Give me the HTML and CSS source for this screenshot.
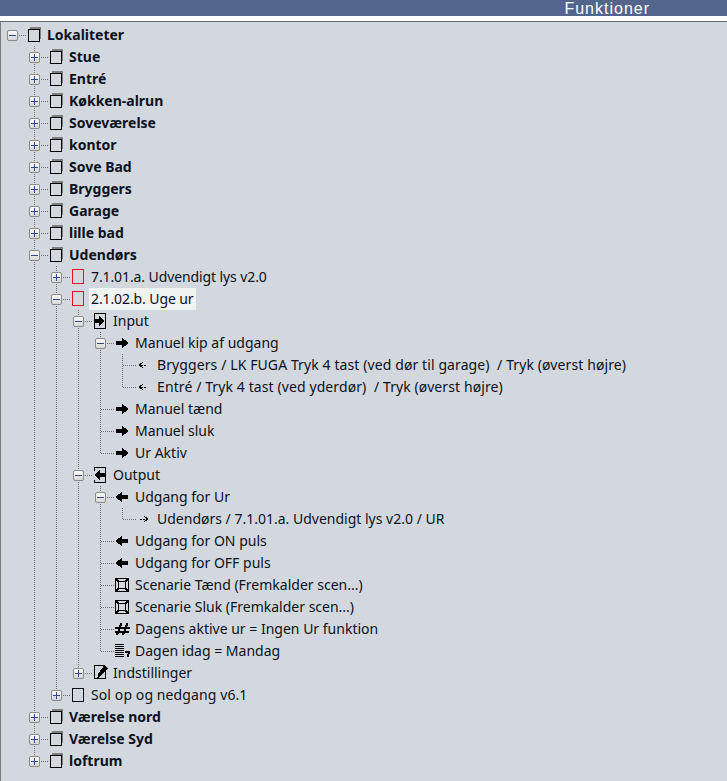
FILE: index.html
```html
<!DOCTYPE html>
<html lang="en">
<head>
    <meta charset="UTF-8">
    <meta name="viewport" content="width=device-width, initial-scale=1.0">
    <title>Funktioner</title>
    <link rel="stylesheet" href="styles.css">
</head>
<body>
    <svg class="defs" width="0" height="0">
        <symbol id="folder" viewBox="0 0 16 16">
            <path d="M4 0H15V12H13V2H4Z" fill="#7f7f7f"/>
            <rect x="2.5" y="2.5" width="10.5" height="12" fill="none" stroke="#000"/>
        </symbol>
        <symbol id="red" viewBox="0 0 16 16">
            <rect x="2.5" y="0.5" width="11" height="14" fill="none" stroke="#e8141c"/>
        </symbol>
        <symbol id="doc" viewBox="0 0 16 16">
            <rect x="2.5" y="1.5" width="11" height="13" fill="none" stroke="#111"/>
        </symbol>
        <symbol id="input" viewBox="0 0 16 16">
            <rect x="2.5" y="0.5" width="11" height="15" fill="none" stroke="#000"/>
            <path d="M2 6H7V2.5L12.5 8L7 13.5V10H2Z" fill="#000"/>
        </symbol>
        <symbol id="output" viewBox="0 0 16 16">
            <path d="M2.5 3.5V0.5H13.5V15H2.5V12.5" fill="none" stroke="#000"/>
            <path d="M13 6H8V2.5L2.5 8L8 13.5V10H13Z" fill="#000"/>
        </symbol>
        <symbol id="right" viewBox="0 0 16 16">
            <path d="M2 6H8V2.5L14.5 8L8 13.5V10H2Z" fill="#000"/>
        </symbol>
        <symbol id="left" viewBox="0 0 16 16">
            <path d="M14 6H8V2.5L1.5 8L8 13.5V10H14Z" fill="#000"/>
        </symbol>
        <symbol id="in-link" viewBox="0 0 16 16">
            <path d="M7 5L3.5 8L7 11" fill="none" stroke="#000"/>
            <path d="M5 8.5H11" fill="none" stroke="#000" stroke-dasharray="2 1"/>
        </symbol>
        <symbol id="out-link" viewBox="0 0 16 16">
            <path d="M8 5L11.5 8L8 11" fill="none" stroke="#000"/>
            <path d="M4 8.5H10" fill="none" stroke="#000" stroke-dasharray="2 1"/>
        </symbol>
        <symbol id="scene" viewBox="0 0 16 16">
            <rect x="1.5" y="1.5" width="13" height="13" fill="none" stroke="#000"/>
            <rect x="4.5" y="4.5" width="7" height="7" fill="none" stroke="#000"/>
            <path d="M1.5 1.5L4.5 4.5M14.5 1.5L11.5 4.5M1.5 14.5L4.5 11.5M14.5 14.5L11.5 11.5" fill="none" stroke="#000" stroke-width="1.5"/>
        </symbol>
        <symbol id="hash" viewBox="0 0 16 16">
            <path d="M7.5 2L3 14M13.5 2L9 14" fill="none" stroke="#000" stroke-width="2"/>
            <path d="M1 6.5H16M1 10.5H15" fill="none" stroke="#000" stroke-width="2"/>
        </symbol>
        <symbol id="list" viewBox="0 0 16 16">
            <path d="M1 1.5H10M1 3.5H10M1 5.5H10M1 7.5H10M1 9.5H10M1 11.5H10M1 13.5H10" fill="none" stroke="#000"/>
            <path d="M11 8H16V10L14.5 14H12.5L14 10H11Z" fill="#000"/>
        </symbol>
        <symbol id="edit" viewBox="0 0 16 16">
            <path d="M11.5 0.5H2.5V13.5H13.5V6" fill="none" stroke="#000"/>
            <path d="M12.5 0L16 3L9.5 10.5L5 13.5L6.5 8Z" fill="#000"/>
        </symbol>
    </svg>

    <header class="title-bar"><span>Funktioner</span></header>

    <main class="panel">
        <ul class="tree root">
            <li class="last">
                <div class="row bold"><i class="exp open"></i><svg class="ico"><use href="#folder"/></svg><span class="label">Lokaliteter</span></div>
                <ul class="tree">
                    <li><div class="row bold"><i class="exp"></i><svg class="ico"><use href="#folder"/></svg><span class="label">Stue</span></div></li>
                    <li><div class="row bold"><i class="exp"></i><svg class="ico"><use href="#folder"/></svg><span class="label">Entré</span></div></li>
                    <li><div class="row bold"><i class="exp"></i><svg class="ico"><use href="#folder"/></svg><span class="label">Køkken-alrun</span></div></li>
                    <li><div class="row bold"><i class="exp"></i><svg class="ico"><use href="#folder"/></svg><span class="label">Soveværelse</span></div></li>
                    <li><div class="row bold"><i class="exp"></i><svg class="ico"><use href="#folder"/></svg><span class="label">kontor</span></div></li>
                    <li><div class="row bold"><i class="exp"></i><svg class="ico"><use href="#folder"/></svg><span class="label">Sove Bad</span></div></li>
                    <li><div class="row bold"><i class="exp"></i><svg class="ico"><use href="#folder"/></svg><span class="label">Bryggers</span></div></li>
                    <li><div class="row bold"><i class="exp"></i><svg class="ico"><use href="#folder"/></svg><span class="label">Garage</span></div></li>
                    <li><div class="row bold"><i class="exp"></i><svg class="ico"><use href="#folder"/></svg><span class="label">lille bad</span></div></li>
                    <li>
                        <div class="row bold"><i class="exp open"></i><svg class="ico"><use href="#folder"/></svg><span class="label">Udendørs</span></div>
                        <ul class="tree">
                            <li><div class="row"><i class="exp"></i><svg class="ico"><use href="#red"/></svg><span class="label tight">7.1.01.a. Udvendigt lys v2.0</span></div></li>
                            <li>
                                <div class="row"><i class="exp open"></i><svg class="ico"><use href="#red"/></svg><span class="label tight selected">2.1.02.b. Uge ur</span></div>
                                <ul class="tree">
                                    <li>
                                        <div class="row"><i class="exp open"></i><svg class="ico"><use href="#input"/></svg><span class="label">Input</span></div>
                                        <ul class="tree">
                                            <li>
                                                <div class="row"><i class="exp open"></i><svg class="ico"><use href="#right"/></svg><span class="label">Manuel kip af udgang</span></div>
                                                <ul class="tree">
                                                    <li><div class="row"><i class="exp none"></i><svg class="ico"><use href="#in-link"/></svg><span class="label wide">Bryggers / LK FUGA Tryk 4 tast (ved dør til garage)&nbsp; / Tryk (øverst højre)</span></div></li>
                                                    <li class="last"><div class="row"><i class="exp none"></i><svg class="ico"><use href="#in-link"/></svg><span class="label wide">Entré / Tryk 4 tast (ved yderdør)&nbsp; / Tryk (øverst højre)</span></div></li>
                                                </ul>
                                            </li>
                                            <li><div class="row"><i class="exp none"></i><svg class="ico"><use href="#right"/></svg><span class="label">Manuel tænd</span></div></li>
                                            <li><div class="row"><i class="exp none"></i><svg class="ico"><use href="#right"/></svg><span class="label">Manuel sluk</span></div></li>
                                            <li class="last"><div class="row"><i class="exp none"></i><svg class="ico"><use href="#right"/></svg><span class="label">Ur Aktiv</span></div></li>
                                        </ul>
                                    </li>
                                    <li>
                                        <div class="row"><i class="exp open"></i><svg class="ico"><use href="#output"/></svg><span class="label">Output</span></div>
                                        <ul class="tree">
                                            <li>
                                                <div class="row"><i class="exp open"></i><svg class="ico"><use href="#left"/></svg><span class="label">Udgang for Ur</span></div>
                                                <ul class="tree">
                                                    <li class="last"><div class="row"><i class="exp none"></i><svg class="ico"><use href="#out-link"/></svg><span class="label">Udendørs / 7.1.01.a. Udvendigt lys v2.0 / UR</span></div></li>
                                                </ul>
                                            </li>
                                            <li><div class="row"><i class="exp none"></i><svg class="ico"><use href="#left"/></svg><span class="label">Udgang for ON puls</span></div></li>
                                            <li><div class="row"><i class="exp none"></i><svg class="ico"><use href="#left"/></svg><span class="label">Udgang for OFF puls</span></div></li>
                                            <li><div class="row"><i class="exp none"></i><svg class="ico"><use href="#scene"/></svg><span class="label">Scenarie Tænd (Fremkalder scen...)</span></div></li>
                                            <li><div class="row"><i class="exp none"></i><svg class="ico"><use href="#scene"/></svg><span class="label">Scenarie Sluk (Fremkalder scen...)</span></div></li>
                                            <li><div class="row"><i class="exp none"></i><svg class="ico"><use href="#hash"/></svg><span class="label">Dagens aktive ur = Ingen Ur funktion</span></div></li>
                                            <li class="last"><div class="row"><i class="exp none"></i><svg class="ico"><use href="#list"/></svg><span class="label">Dagen idag = Mandag</span></div></li>
                                        </ul>
                                    </li>
                                    <li class="last"><div class="row"><i class="exp"></i><svg class="ico"><use href="#edit"/></svg><span class="label">Indstillinger</span></div></li>
                                </ul>
                            </li>
                            <li class="last"><div class="row"><i class="exp"></i><svg class="ico"><use href="#doc"/></svg><span class="label wide">Sol op og nedgang v6.1</span></div></li>
                        </ul>
                    </li>
                    <li><div class="row bold"><i class="exp"></i><svg class="ico"><use href="#folder"/></svg><span class="label">Værelse nord</span></div></li>
                    <li><div class="row bold"><i class="exp"></i><svg class="ico"><use href="#folder"/></svg><span class="label">Værelse Syd</span></div></li>
                    <li class="last"><div class="row bold"><i class="exp"></i><svg class="ico"><use href="#folder"/></svg><span class="label">loftrum</span></div></li>
                </ul>
            </li>
        </ul>
    </main>
</body>
</html>
```

FILE: styles.css
```css
/* Global Styles */
html, body {
    height: 100%;
}

body {
    margin: 0;
    display: flex;
    flex-direction: column;
    overflow: hidden;
    background: #fff;
    font-family: 'Noto Sans', sans-serif;
    font-size: 14px;
    color: #0c1220;
}

.defs {
    display: block;
    height: 0;
}

/* Title bar */
.title-bar {
    height: 16px;
    flex: none;
    display: flex;
    align-items: flex-start;
    justify-content: flex-end;
    padding-right: 77px;
    background: #53658c;
    color: #fff;
    font-family: 'Liberation Sans', sans-serif;
    font-size: 16px;
    line-height: 17px;
    letter-spacing: 1px;
}

/* Tree panel */
.panel {
    flex: 1;
    margin-top: 5px;
    padding: 2px 0 0 1px;
    background: #d3d8de;
    border-top: 1px solid #6b6b6b;
    border-left: 1px solid #7c7c7c;
}

.tree {
    list-style: none;
    margin: 0;
    padding: 0 0 0 22px;
}

.tree.root {
    padding-left: 0;
}

/* Vertical connector, runs down the whole item */
.tree li {
    background-image: repeating-linear-gradient(to bottom, #6e6e6e 0 1px, transparent 1px 2px);
    background-repeat: no-repeat;
    background-position: 10px 0;
    background-size: 1px 100%;
}

.tree li.last {
    background-size: 1px 11px;
}

.root > li.last {
    background-image: none;
}

.row {
    height: 22px;
    display: flex;
    align-items: center;
    white-space: nowrap;
    /* Horizontal connector */
    background-image: repeating-linear-gradient(to right, #6e6e6e 0 1px, transparent 1px 2px);
    background-repeat: no-repeat;
    background-position: 11px 11px;
    background-size: 13px 1px;
}

.bold {
    font-weight: 700;
}

/* Expander box */
.exp {
    width: 11px;
    height: 11px;
    flex: none;
    box-sizing: border-box;
    margin: 0 8px 0 5px;
    border: 1px solid #8b8b8b;
    border-radius: 2px;
    background:
        linear-gradient(#34478a, #34478a) center / 7px 1px no-repeat,
        linear-gradient(#34478a, #34478a) center / 1px 7px no-repeat,
        linear-gradient(#fbfbfb, #d6d6d6);
}

.exp.open {
    background:
        linear-gradient(#34478a, #34478a) center / 7px 1px no-repeat,
        linear-gradient(#fbfbfb, #d6d6d6);
}

.exp.none {
    border: none;
    background: none;
}

.ico {
    width: 16px;
    height: 16px;
    flex: none;
    margin-right: 3px;
    shape-rendering: crispEdges;
}

.label {
    height: 22px;
    padding: 0 2px;
    line-height: 22px;
}

.label.selected {
    background: #f1f3f3;
}

/* Small width corrections for a few labels */
.wide {
    letter-spacing: 0.1px;
}

.tight {
    letter-spacing: -0.1px;
}
```
